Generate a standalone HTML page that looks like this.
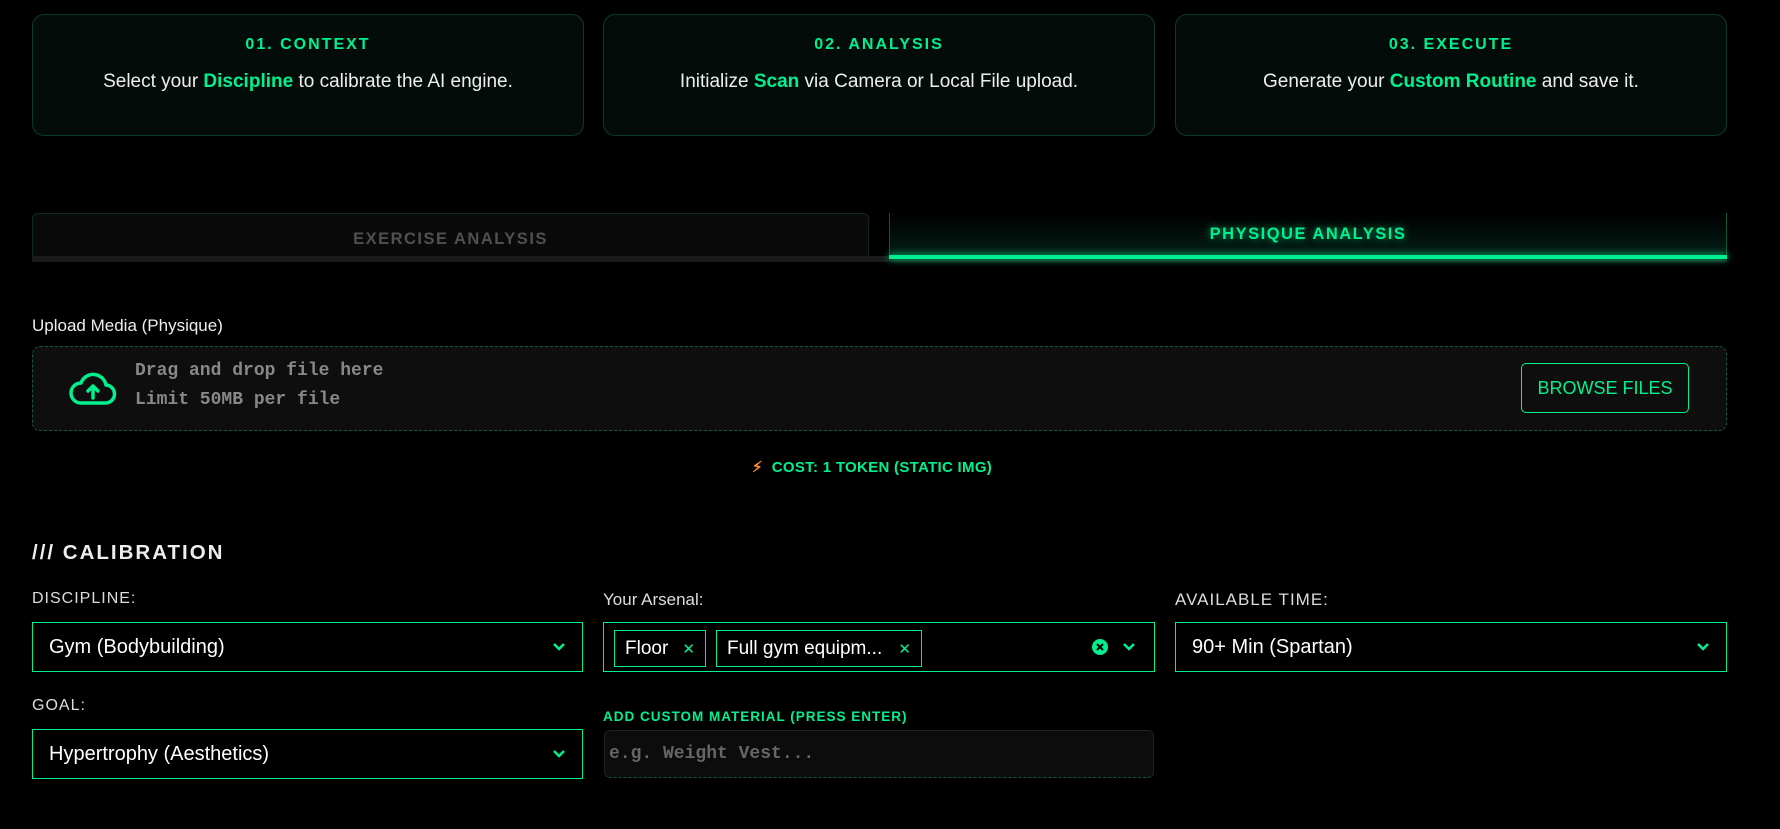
<!DOCTYPE html>
<html><head><meta charset="utf-8"><style>
*{box-sizing:border-box;margin:0;padding:0}
body{width:1780px;height:829px;background:#000;font-family:"Liberation Sans",sans-serif;color:#fff;position:relative;overflow:hidden}
.a{position:absolute}
.g{color:#00f090}
.card{position:absolute;top:14px;width:552px;height:122px;background:#040c0a;border:1px solid #0b3a2a;border-radius:12px;text-align:center}
.card h3{margin-top:21px;font-size:16px;letter-spacing:2px;color:#00f090;font-weight:bold}
.card p{margin-top:17px;font-size:19px;color:#eee}
.card p b{color:#00f090}
.sel{position:absolute;border:1px solid #00f090;height:50px;background:#000;font-size:20px;padding-left:16px;display:flex;align-items:center}
.chev{position:absolute;right:16px;top:19px}
.lbl{position:absolute;font-size:16px;color:#ddd;letter-spacing:1px}
.tag{position:absolute;top:7px;height:37px;border:1px solid #00f090;font-size:19px;display:flex;align-items:center;padding-left:10px}
</style></head><body>
<div class="card" style="left:32px"><h3>01. CONTEXT</h3><p>Select your <b>Discipline</b> to calibrate the AI engine.</p></div>
<div class="card" style="left:603px"><h3>02. ANALYSIS</h3><p>Initialize <b>Scan</b> via Camera or Local File upload.</p></div>
<div class="card" style="left:1175px"><h3>03. EXECUTE</h3><p>Generate your <b>Custom Routine</b> and save it.</p></div>

<div class="a" style="left:32px;top:213px;width:837px;height:48px;background:#0a0a0a;border:1px solid #0f2a20;border-bottom:none;border-radius:6px 6px 0 0;text-align:center;line-height:50px;font-size:16.5px;font-weight:bold;letter-spacing:1.5px;color:#505050">EXERCISE ANALYSIS</div>
<div class="a" style="left:32px;top:256px;width:1695px;height:6px;background:#1a1a1a"></div>
<div class="a" style="left:889px;top:213px;width:838px;height:46px;background:linear-gradient(#000,#032018);border-left:1px solid #0a5a3a;border-right:1px solid #0a5a3a"></div>
<div class="a" style="left:889px;top:213px;width:838px;line-height:42px;text-align:center;font-size:16.5px;font-weight:bold;letter-spacing:1.5px;color:#00f090;text-shadow:0 0 8px rgba(0,240,144,.7)">PHYSIQUE ANALYSIS</div>
<div class="a" style="left:889px;top:255px;width:838px;height:4px;background:#00f090;box-shadow:0 0 8px #00f090"></div>

<div class="a" style="left:32px;top:316px;font-size:17px;color:#eee">Upload Media (Physique)</div>
<div class="a" style="left:32px;top:346px;width:1695px;height:85px;background:#0e0e0e;border:1px dashed #0d5a3c;border-radius:8px"></div>
<svg class="a" style="left:69px;top:370px" width="48" height="36" viewBox="0 0 48 36" fill="none" stroke="#00f090" stroke-width="3.5" stroke-linejoin="round" stroke-linecap="round"><path d="M12 33h24a9 9 0 0 0 1-18 13 13 0 0 0-25-2A10 10 0 0 0 12 33z"/><path d="M24 28V16m-5 5 5-5 5 5"/></svg>
<div class="a" style="left:135px;top:357px;font-family:'Liberation Mono',monospace;font-weight:bold;font-size:18px;color:#888;line-height:29px">Drag and drop file here<br>Limit 50MB per file</div>
<div class="a" style="left:1521px;top:363px;width:168px;height:50px;border:1px solid #00f090;border-radius:5px;color:#00f090;font-size:18px;text-align:center;line-height:48px">BROWSE FILES</div>

<div class="a" style="left:752px;top:458px;font-size:15px;font-weight:bold;color:#00f090;letter-spacing:.3px"><span style="color:#ff8c30">&#9889;&#xFE0E;</span>&nbsp; COST: 1 TOKEN (STATIC IMG)</div>

<div class="a" style="left:32px;top:541px;font-size:20.5px;font-weight:bold;letter-spacing:2px;color:#eee">/// CALIBRATION</div>

<div class="lbl" style="left:32px;top:590px">DISCIPLINE:</div>
<div class="lbl" style="left:603px;top:590px;letter-spacing:0;font-size:17px">Your Arsenal:</div>
<div class="lbl" style="left:1175px;top:590px;font-size:17px">AVAILABLE TIME:</div>

<div class="sel" style="left:32px;top:622px;width:551px">Gym (Bodybuilding)<svg class="chev" width="14" height="10" viewBox="0 0 14 10"><path d="M2 2l5 5 5-5" stroke="#00f090" stroke-width="2.5" fill="none"/></svg></div>
<div class="sel" style="left:603px;top:622px;width:552px">
<div class="tag" style="left:10px;width:92px">Floor<span class="g" style="position:absolute;right:10px;font-size:15px">✕</span></div>
<div class="tag" style="left:112px;width:206px">Full gym equipm...<span class="g" style="position:absolute;right:10px;font-size:15px">✕</span></div>
<svg class="a" style="left:487px;top:15px" width="18" height="18" viewBox="0 0 18 18"><circle cx="9" cy="9" r="8" fill="#00f090"/><path d="M6 6l6 6M12 6l-6 6" stroke="#000" stroke-width="2"/></svg>
<svg class="chev" style="right:18px" width="14" height="10" viewBox="0 0 14 10"><path d="M2 2l5 5 5-5" stroke="#00f090" stroke-width="2.5" fill="none"/></svg></div>
<div class="sel" style="left:1175px;top:622px;width:552px">90+ Min (Spartan)<svg class="chev" width="14" height="10" viewBox="0 0 14 10"><path d="M2 2l5 5 5-5" stroke="#00f090" stroke-width="2.5" fill="none"/></svg></div>

<div class="lbl" style="left:32px;top:697px">GOAL:</div>
<div class="a" style="left:603px;top:709px;font-size:13.5px;font-weight:bold;letter-spacing:1px;color:#00f090">ADD CUSTOM MATERIAL (PRESS ENTER)</div>
<div class="sel" style="left:32px;top:729px;width:551px">Hypertrophy (Aesthetics)<svg class="chev" width="14" height="10" viewBox="0 0 14 10"><path d="M2 2l5 5 5-5" stroke="#00f090" stroke-width="2.5" fill="none"/></svg></div>
<div class="a" style="left:604px;top:730px;width:550px;height:48px;background:#0c0c0c;border:1px solid #222;border-bottom:1px dashed #0d5a3c;border-radius:6px;font-family:'Liberation Mono',monospace;font-weight:bold;font-size:18px;color:#666;padding-left:4px;line-height:46px">e.g. Weight Vest...</div>
</body></html>
